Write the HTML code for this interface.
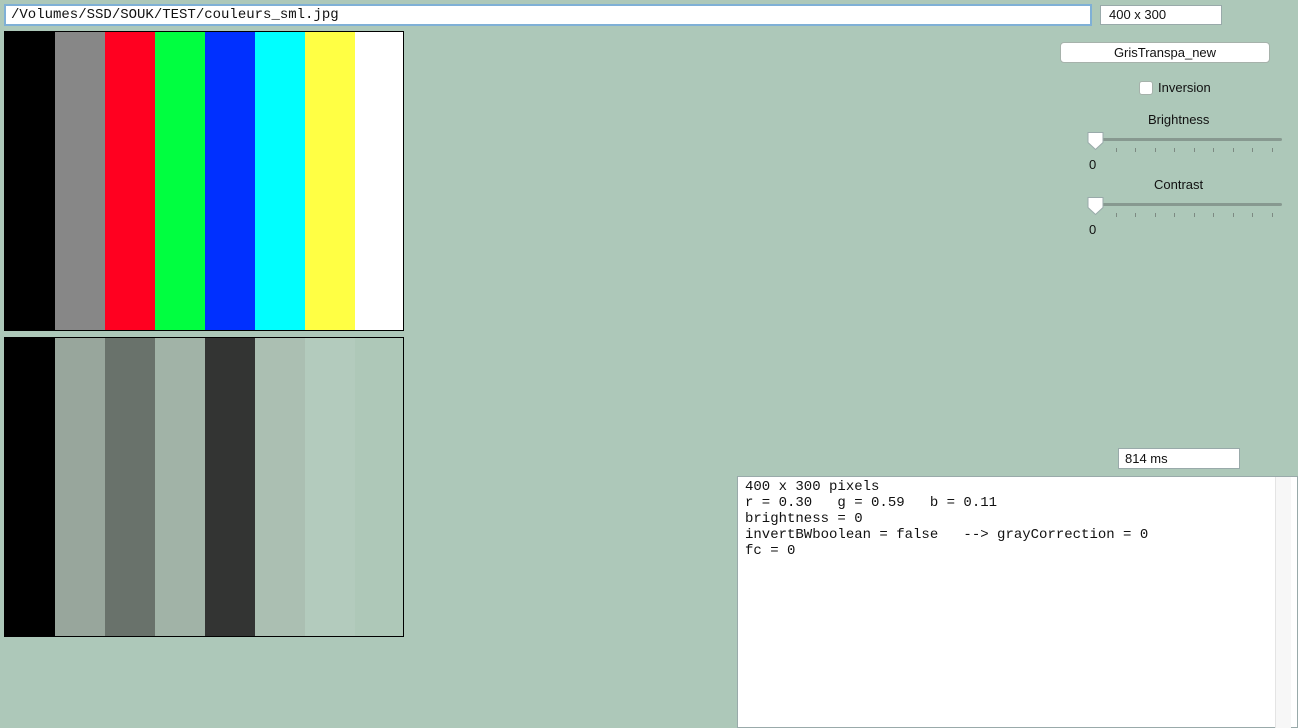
<!DOCTYPE html>
<html><head><meta charset="utf-8"><style>
body{margin:0;width:1298px;height:728px;background:#adc8b9;position:relative;overflow:hidden;font-family:"Liberation Sans",sans-serif;font-size:13px;color:#111}
.a{position:absolute}
.img{position:absolute;left:4px;width:398px;height:298px;border:1px solid #000;display:flex}
.img div{width:50px;height:100%;flex:none}
.fld{background:#fff;border:1px solid #9aa;box-sizing:border-box}
.tick{position:absolute;width:1px;height:4px;background:#7d8a82}
</style></head><body>
<div class="a fld" style="left:4px;top:4px;width:1088px;height:22px;border:2px solid #7fb0d6;font-family:'Liberation Mono',monospace;font-size:14px;line-height:18px;padding-left:5px">/Volumes/SSD/SOUK/TEST/couleurs_sml.jpg</div>
<div class="a fld" style="left:1100px;top:5px;width:122px;height:20px;padding-left:8px;line-height:18px">400 x 300</div>
<div class="img" style="top:31px"><div style="background:#000"></div><div style="background:#878787"></div><div style="background:#ff0020"></div><div style="background:#00ff40"></div><div style="background:#0030ff"></div><div style="background:#00ffff"></div><div style="background:#ffff44"></div><div style="background:#fff;width:48px"></div></div>
<div class="img" style="top:337px"><div style="background:#000"></div><div style="background:#98a69c"></div><div style="background:#69726b"></div><div style="background:#a1b3a7"></div><div style="background:#333433"></div><div style="background:#abbfb2"></div><div style="background:#b3cbbd"></div><div style="background:#aec8b8;width:48px"></div></div>
<div class="a" style="left:1060px;top:42px;width:208px;height:19px;background:#fff;border:1px solid #a6b2ab;border-radius:4px;text-align:center;line-height:19px">GrisTranspa_new</div>
<div class="a" style="left:1139px;top:81px;width:12px;height:12px;background:#fff;border:1px solid #a6b2ab;border-radius:3px"></div>
<div class="a" style="left:1158px;top:80px">Inversion</div>
<div class="a" style="left:1148px;top:112px">Brightness</div>
<div class="a" style="left:1095px;top:138px;width:187px;height:3px;background:#879990;border-radius:2px"></div>
<svg class="a" style="left:1086px;top:131px" width="19" height="20"><path d="M2 1.5h15v10l-7.5 7l-7.5-7z" fill="#fff" stroke="#9aa" /></svg>
<div class="a" style="left:1089px;top:157px">0</div>
<div class="a" style="left:1154px;top:177px">Contrast</div>
<div class="a" style="left:1095px;top:203px;width:187px;height:3px;background:#879990;border-radius:2px"></div>
<svg class="a" style="left:1086px;top:196px" width="19" height="20"><path d="M2 1.5h15v10l-7.5 7l-7.5-7z" fill="#fff" stroke="#9aa" /></svg>
<div class="a" style="left:1089px;top:222px">0</div>
<div class="tick" style="left:1116px;top:148px"></div><div class="tick" style="left:1135px;top:148px"></div><div class="tick" style="left:1155px;top:148px"></div><div class="tick" style="left:1174px;top:148px"></div><div class="tick" style="left:1194px;top:148px"></div><div class="tick" style="left:1213px;top:148px"></div><div class="tick" style="left:1233px;top:148px"></div><div class="tick" style="left:1252px;top:148px"></div><div class="tick" style="left:1272px;top:148px"></div>
<div class="tick" style="left:1116px;top:213px"></div><div class="tick" style="left:1135px;top:213px"></div><div class="tick" style="left:1155px;top:213px"></div><div class="tick" style="left:1174px;top:213px"></div><div class="tick" style="left:1194px;top:213px"></div><div class="tick" style="left:1213px;top:213px"></div><div class="tick" style="left:1233px;top:213px"></div><div class="tick" style="left:1252px;top:213px"></div><div class="tick" style="left:1272px;top:213px"></div>
<div class="a fld" style="left:1118px;top:448px;width:122px;height:21px;padding-left:6px;line-height:20px">814 ms</div>
<div class="a" style="left:737px;top:476px;width:561px;height:252px;background:#fff;border:1px solid #9aa;box-sizing:border-box"></div>
<div class="a" style="left:1275px;top:477px;width:15px;height:251px;background:#f7f7f7;border-left:1px solid #e4e4e4"></div>
<pre class="a" style="left:745px;top:479px;margin:0;font-family:'Liberation Mono',monospace;font-size:14px;line-height:16px">400 x 300 pixels
r = 0.30   g = 0.59   b = 0.11
brightness = 0
invertBWboolean = false   --> grayCorrection = 0
fc = 0</pre>
</body></html>
